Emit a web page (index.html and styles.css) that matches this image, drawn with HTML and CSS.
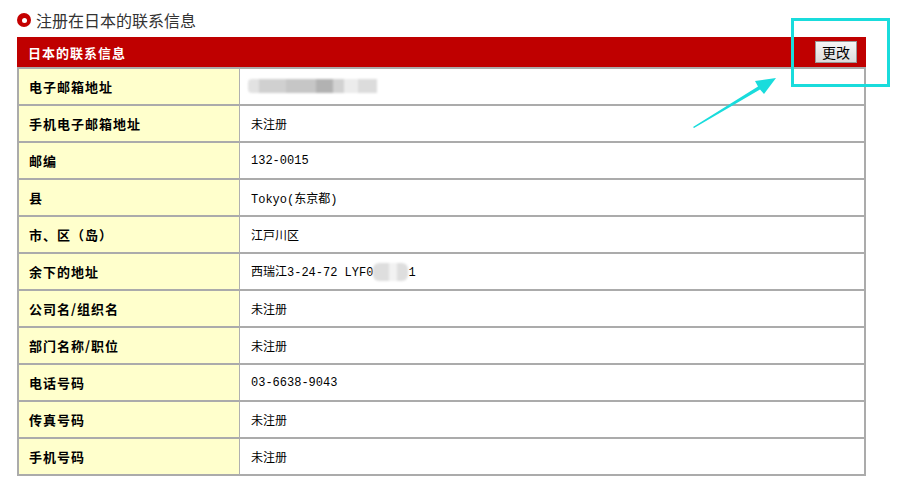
FILE: index.html
```html
<!DOCTYPE html>
<html lang="zh-CN">
<head>
    <meta charset="UTF-8">
    <title>注册在日本的联系信息</title>
    <link rel="stylesheet" href="styles.css">
</head>
<body>
    <div class="page">
        <h2 class="title"><span class="dot"></span>注册在日本的联系信息</h2>
        <div class="box-head">
            <span>日本的联系信息</span>
            <button class="btn-edit">更改</button>
        </div>
        <table class="info">
            <tr><td class="label">电子邮箱地址</td><td class="val"><span class="blur-mail"></span></td></tr>
            <tr><td class="label">手机电子邮箱地址</td><td class="val">未注册</td></tr>
            <tr><td class="label">邮编</td><td class="val">132-0015</td></tr>
            <tr><td class="label">县</td><td class="val">Tokyo(东京都)</td></tr>
            <tr><td class="label">市、区（岛）</td><td class="val">江戸川区</td></tr>
            <tr><td class="label">余下的地址</td><td class="val">西瑞江3-24-72 LYF0<span class="blur-addr"></span>1</td></tr>
            <tr><td class="label">公司名/组织名</td><td class="val">未注册</td></tr>
            <tr><td class="label">部门名称/职位</td><td class="val">未注册</td></tr>
            <tr><td class="label">电话号码</td><td class="val">03-6638-9043</td></tr>
            <tr><td class="label">传真号码</td><td class="val">未注册</td></tr>
            <tr><td class="label">手机号码</td><td class="val">未注册</td></tr>
        </table>
    </div>
    <!-- 标注：框和箭头 -->
    <svg class="mark" width="906" height="490" viewBox="0 0 906 490">
        <rect x="792.5" y="19.5" width="96" height="66" fill="none" stroke="#19dcdc" stroke-width="3"/>
        <polygon points="693,127 758,86.5 755,81 776,78 764,94 760,89.5 694,128" fill="#19dcdc"/>
    </svg>
</body>
</html>
```

FILE: styles.css
```css
*{
    margin: 0;
    padding: 0;
}
body{
    background: #fff;
    font-family: "Noto Sans CJK SC", sans-serif;
}
.page{
    width: 849px;
    padding: 10px 0 0 17px;
}
.title{
    display: flex;
    align-items: center;
    height: 20px;
    margin-bottom: 7px;
    font-size: 16px;
    font-weight: normal;
    color: #333;
    line-height: 20px;
}
.dot{
    display: inline-flex;
    align-items: center;
    justify-content: center;
    width: 14px;
    height: 14px;
    margin-right: 5px;
    border-radius: 50%;
    background: #c40000;
}
.dot::after{
    content: "";
    width: 5px;
    height: 5px;
    border-radius: 50%;
    background: #fff;
}
.box-head{
    display: flex;
    justify-content: space-between;
    align-items: center;
    height: 30px;
    padding: 0 9px 0 11px;
    background: #bf0000;
    color: #fff;
    font-size: 13px;
    font-weight: bold;
    letter-spacing: 1px;
}
.btn-edit{
    width: 42px;
    height: 22px;
    border: 1px solid #999;
    background: linear-gradient(#f6f6f6, #dcdcdc);
    font-family: "Noto Sans CJK SC", sans-serif;
    font-size: 14px;
    color: #000;
    line-height: 20px;
}
.info{
    width: 849px;
    border: 2px solid #ababab;
    border-bottom: 0;
    border-spacing: 0;
    table-layout: fixed;
}
.info td{
    box-sizing: border-box;
    height: 37px;
    border-bottom: 2px solid #ababab;
    vertical-align: middle;
}
.info .label{
    width: 221px;
    padding-left: 10px;
    border-right: 1px solid #b0b0b0;
    background: #ffffcc;
    font-size: 13px;
    font-weight: bold;
    letter-spacing: 1px;
    color: #000;
}
.info .val{
    padding-left: 11px;
    font-family: "Liberation Mono", "Noto Sans CJK SC", monospace;
    font-size: 12px;
    color: #000;
}
.blur-mail{
    display: inline-block;
    vertical-align: middle;
    width: 137px;
    height: 14px;
    margin-left: -3px;
    border-radius: 4px;
    background: linear-gradient(to right, #e2e2e2 0 8%, #d0d0d0 8% 28%, #c6c6c6 28% 50%, #b2b2b2 50% 62%, #d2d2d2 62% 70%, #ececec 70% 80%, #dcdcdc 80% 94%, #fff 94%);
    filter: blur(1px);
}
.blur-addr{
    display: inline-block;
    vertical-align: middle;
    width: 35px;
    height: 18px;
    border-radius: 6px;
    background: linear-gradient(to right, #dedede 0 45%, #f2f2f2 45% 70%, #dedede 70%);
    filter: blur(1px);
}
.mark{
    position: absolute;
    left: 0;
    top: 0;
    pointer-events: none;
}
```
